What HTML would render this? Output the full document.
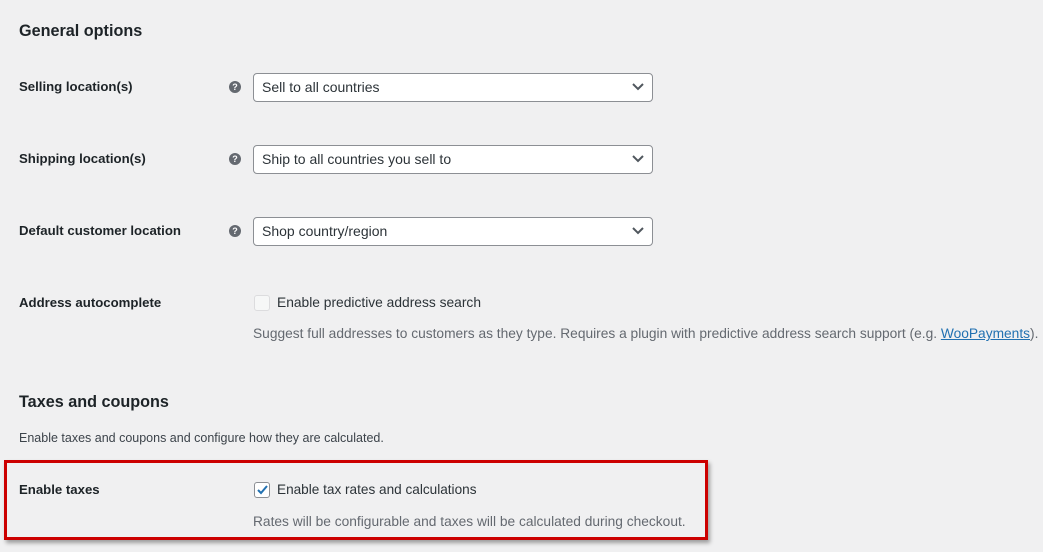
<!DOCTYPE html>
<html><head><style>
body{margin:0;width:1043px;height:552px;background:#f0f0f1;font-family:"Liberation Sans",sans-serif;color:#1d2327;position:relative;overflow:hidden}
.a{position:absolute;white-space:nowrap}
h2{position:absolute;margin:0;font-size:16.2px;font-weight:600;color:#1d2327}
.lbl{font-size:13.2px;font-weight:bold;color:#1d2327}
.help{width:12px;height:12px;border-radius:50%;background:#646970;color:#fff;font-size:9px;font-weight:bold;text-align:center;line-height:12px}
.sel{position:absolute;left:253px;width:398px;height:27px;border:1px solid #8c8f94;border-radius:4px;background:#fff;font-size:14px;line-height:27px;box-sizing:content-box}
.sel span{position:absolute;left:8px;color:#2c3338}
.sel svg{position:absolute;right:8px;top:9px}
.desc{font-size:13.75px;color:#646970}
.cb{position:absolute;width:14px;height:14px;border:1px solid #8c8f94;border-radius:3px;background:#fff}
</style></head><body>
<h2 style="left:19px;top:22px">General options</h2>

<div class="a lbl" style="left:19px;top:79px">Selling location(s)</div>
<div class="a help" style="left:229px;top:81px">?</div>
<div class="sel" style="top:73px"><span>Sell to all countries</span><svg width="12" height="8"><path d="M1 1l5 5 5-5" stroke="#50575e" stroke-width="2" fill="none"/></svg></div>

<div class="a lbl" style="left:19px;top:151px">Shipping location(s)</div>
<div class="a help" style="left:229px;top:153px">?</div>
<div class="sel" style="top:145px"><span>Ship to all countries you sell to</span><svg width="12" height="8"><path d="M1 1l5 5 5-5" stroke="#50575e" stroke-width="2" fill="none"/></svg></div>

<div class="a lbl" style="left:19px;top:223px">Default customer location</div>
<div class="a help" style="left:229px;top:225px">?</div>
<div class="sel" style="top:217px"><span>Shop country/region</span><svg width="12" height="8"><path d="M1 1l5 5 5-5" stroke="#50575e" stroke-width="2" fill="none"/></svg></div>

<div class="a lbl" style="left:19px;top:295px">Address autocomplete</div>
<div class="cb" style="left:254px;top:295px;border-color:#dcdcde;background:#f6f7f7"></div>
<div class="a" style="left:277px;top:295px;font-size:13.8px;color:#2c3338">Enable predictive address search</div>
<div class="a desc" style="left:253px;top:326px">Suggest full addresses to customers as they type. Requires a plugin with predictive address search support (e.g. <span style="color:#2271b1;text-decoration:underline">WooPayments</span>).</div>

<h2 style="left:19px;top:393px">Taxes and coupons</h2>
<div class="a" style="left:19px;top:431px;font-size:12.5px;color:#3c434a">Enable taxes and coupons and configure how they are calculated.</div>

<div style="position:absolute;left:4px;top:460px;width:698px;height:74px;border:3px solid #c00;box-shadow:2px 3px 4px rgba(0,0,0,.35)"></div>
<div class="a lbl" style="left:19px;top:482px">Enable taxes</div>
<div class="cb" style="left:254px;top:482px"><svg width="14" height="14" style="position:absolute;left:0;top:0"><path d="M3 7l3 3 6-7" stroke="#2271b1" stroke-width="2" fill="none"/></svg></div>
<div class="a" style="left:277px;top:482px;font-size:13.6px;color:#2c3338">Enable tax rates and calculations</div>
<div class="a desc" style="left:253px;top:514px">Rates will be configurable and taxes will be calculated during checkout.</div>
</body></html>
